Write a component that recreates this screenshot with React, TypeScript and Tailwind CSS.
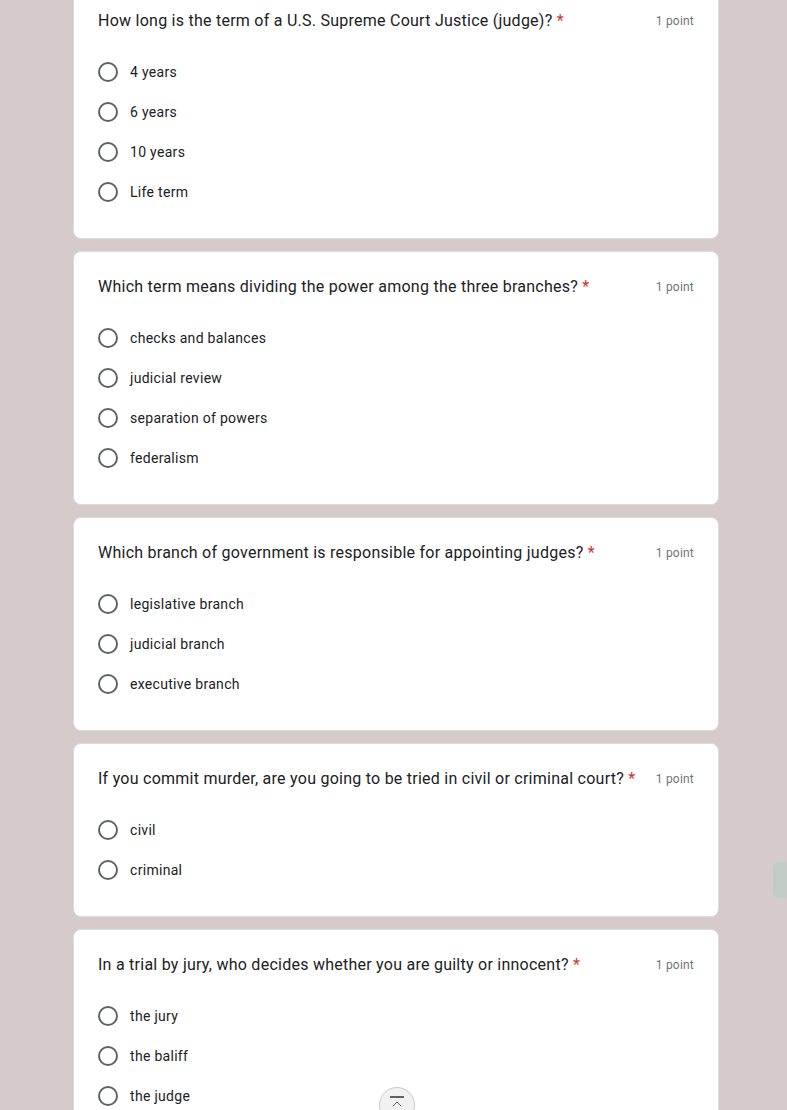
import { ChevronUp } from 'lucide-react';

type Question = {
  title: string;
  options: string[];
};

const questions: Question[] = [
  {
    title: 'How long is the term of a U.S. Supreme Court Justice (judge)?',
    options: ['4 years', '6 years', '10 years', 'Life term'],
  },
  {
    title: 'Which term means dividing the power among the three branches?',
    options: ['checks and balances', 'judicial review', 'separation of powers', 'federalism'],
  },
  {
    title: 'Which branch of government is responsible for appointing judges?',
    options: ['legislative branch', 'judicial branch', 'executive branch'],
  },
  {
    title: 'If you commit murder, are you going to be tried in civil or criminal court?',
    options: ['civil', 'criminal'],
  },
  {
    title: 'In a trial by jury, who decides whether you are guilty or innocent?',
    options: ['the jury', 'the baliff', 'the judge'],
  },
];

function QuestionCard({ q }: { q: Question }) {
  return (
    <div className="bg-white border border-[#dadce0] rounded-lg pt-[23px] pb-[26px] px-6">
      <div className="flex items-start justify-between h-6">
        <div className="text-[16px] leading-6 text-[#202124] tracking-[0.25px]">
          {q.title} <span className="text-[#d93025]">*</span>
        </div>
        <div className="text-[12px] leading-6 text-[#70757a] shrink-0 ml-4 tracking-[0.2px]">1 point</div>
      </div>
      <div className="mt-[19px] flex flex-col">
        {q.options.map((opt) => (
          <label key={opt} className="flex items-center h-10">
            <span className="w-5 h-5 rounded-full border-2 border-[#5f6368] shrink-0"></span>
            <span className="ml-3 text-[14px] text-[#202124] tracking-[0.3px]">{opt}</span>
          </label>
        ))}
      </div>
    </div>
  );
}

export default function App() {
  return (
    <div
      className="relative h-[1110px] overflow-hidden bg-[#d6cbcb]"
      style={{ fontFamily: 'Roboto, "Liberation Sans", sans-serif' }}
    >
      <div className="-mt-[15px] ml-[73px] w-[646px] flex flex-col gap-3">
        {questions.map((q) => (
          <QuestionCard key={q.title} q={q} />
        ))}
      </div>

      {/* scrollbar thumb */}
      <div className="absolute right-0 top-[862px] w-[14px] h-[36px] rounded-l-md bg-[#c3cbc5]"></div>

      {/* back to top */}
      <div className="absolute left-[379px] top-[1087px] w-9 h-9 rounded-full bg-[#f1f1f1] border border-[#c8c8c8] flex items-start justify-center pt-[8px]">
        <div className="flex flex-col items-center">
          <div className="w-[14px] h-[1.5px] bg-[#5f6368]"></div>
          <ChevronUp className="w-4 h-4 text-[#5f6368] -mt-[2px]" strokeWidth={1.5} />
        </div>
      </div>
    </div>
  );
}
